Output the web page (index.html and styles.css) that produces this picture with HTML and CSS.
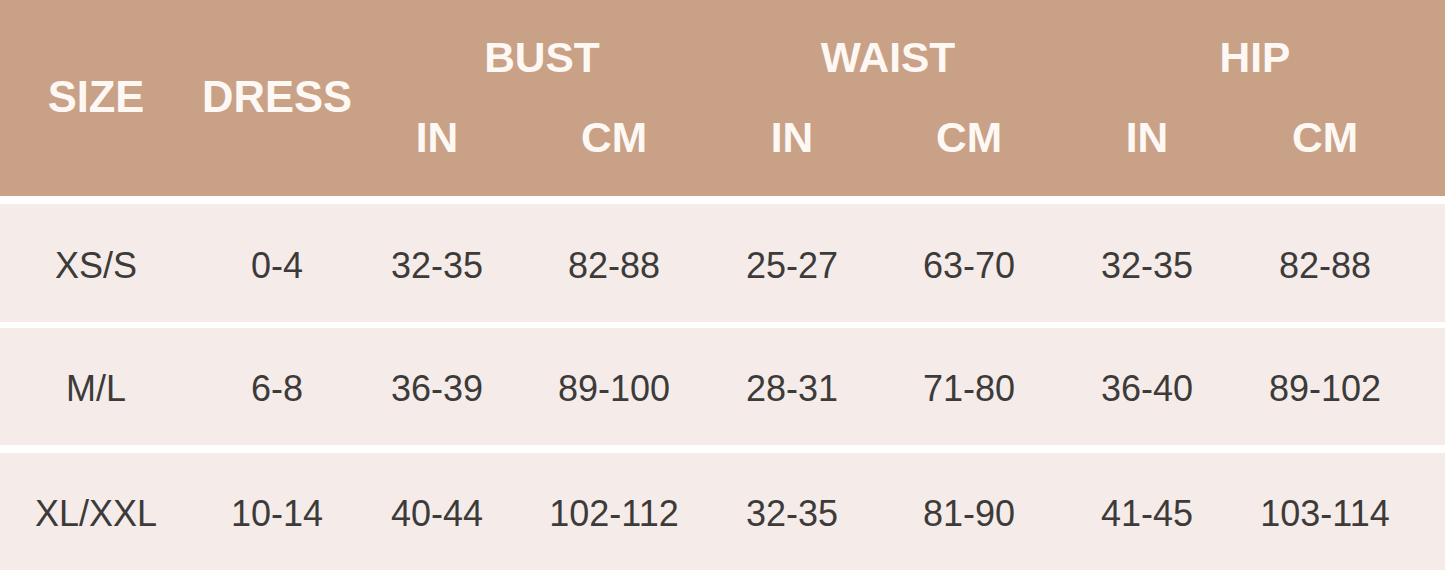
FILE: index.html
```html
<!DOCTYPE html>
<html lang="en">
<head>
<meta charset="utf-8">
<title>Size Chart</title>
<link rel="stylesheet" href="styles.css">
</head>
<body>
<div class="chart">
  <div class="head">
    <div class="hcell main">SIZE</div>
    <div class="hcell main dress">DRESS</div>
    <div class="hcell group bust">BUST</div>
    <div class="hcell group waist">WAIST</div>
    <div class="hcell group hip">HIP</div>
    <div class="hcell unit c3">IN</div>
    <div class="hcell unit c4">CM</div>
    <div class="hcell unit c5">IN</div>
    <div class="hcell unit c6">CM</div>
    <div class="hcell unit c7">IN</div>
    <div class="hcell unit c8">CM</div>
  </div>
  <div class="row r1">
    <div class="cell">XS/S</div><div class="cell">0-4</div><div class="cell">32-35</div><div class="cell">82-88</div><div class="cell">25-27</div><div class="cell">63-70</div><div class="cell">32-35</div><div class="cell">82-88</div>
  </div>
  <div class="row r2">
    <div class="cell">M/L</div><div class="cell">6-8</div><div class="cell">36-39</div><div class="cell">89-100</div><div class="cell">28-31</div><div class="cell">71-80</div><div class="cell">36-40</div><div class="cell">89-102</div>
  </div>
  <div class="row r3">
    <div class="cell">XL/XXL</div><div class="cell">10-14</div><div class="cell">40-44</div><div class="cell">102-112</div><div class="cell">32-35</div><div class="cell">81-90</div><div class="cell">41-45</div><div class="cell">103-114</div>
  </div>
</div>
</body>
</html>
```

FILE: styles.css
```css
html, body {
  margin: 0;
  padding: 0;
  background: #ffffff;
}
body {
  width: 1445px;
  height: 570px;
  overflow: hidden;
  font-family: "Liberation Sans", Arial, sans-serif;
}
.chart {
  display: flex;
  flex-direction: column;
}
.head {
  height: 196px;
  box-sizing: border-box;
  padding: 18px 0;
  background: #c9a186;
  display: grid;
  grid-template-columns: 192px 170px 150px 204px 152px 202px 154px 202px 1fr;
  grid-template-rows: 80px 80px;
  color: #fdf8f4;
  font-weight: 700;
  font-size: 42.5px;
}
.hcell {
  display: flex;
  align-items: center;
  justify-content: center;
  line-height: 1;
}
.main {
  grid-row: 1 / 3;
  grid-column: 1;
  font-size: 43.5px;
}
.main.dress { grid-column: 2; }
.group { grid-row: 1; }
.bust { grid-column: 3 / 5; padding-left: 6px; }
.waist { grid-column: 5 / 7; padding-right: 10px; }
.hip { grid-column: 7 / 9; padding-left: 14px; }
.unit { grid-row: 2; }
.c3 { grid-column: 3; }
.c4 { grid-column: 4; }
.c5 { grid-column: 5; }
.c6 { grid-column: 6; }
.c7 { grid-column: 7; }
.c8 { grid-column: 8; }
.row {
  background: #f5ece9;
  display: grid;
  grid-template-columns: 192px 170px 150px 204px 152px 202px 154px 202px 1fr;
  box-sizing: border-box;
  padding-top: 5px;
  color: #3d3b3a;
  font-size: 36px;
}
.r1 { height: 118px; margin-top: 8px; }
.r2 { height: 117px; margin-top: 6px; }
.r3 { height: 117px; margin-top: 8px; }
.cell {
  display: flex;
  align-items: center;
  justify-content: center;
  line-height: 1;
}
```
